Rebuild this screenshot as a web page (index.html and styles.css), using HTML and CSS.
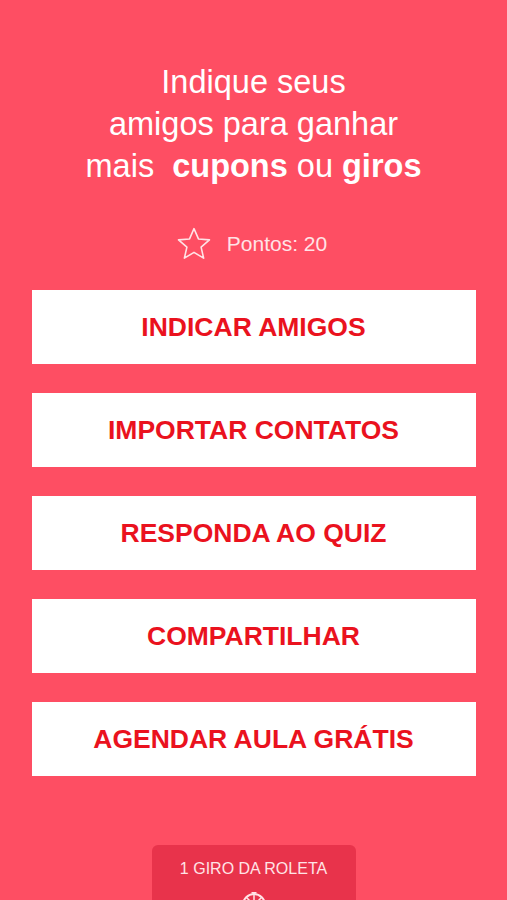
FILE: index.html
```html
<!DOCTYPE html>
<html lang="pt-BR">
<head>
  <meta charset="UTF-8" />
  <meta name="viewport" content="width=device-width, initial-scale=1.0"/>
  <title>Indique seus amigos</title>
  <link rel="stylesheet" href="styles.css">
</head>
<body>
  <div class="page">
    <h1 class="title">
      Indique seus<br>
      amigos para ganhar<br>
      mais&nbsp; <b>cupons</b> ou <b>giros</b>
    </h1>

    <div class="pontos">
      <svg class="star" width="36" height="36" viewBox="0 0 34 34">
        <path d="M17 2.5 L21.2 12.2 L31.6 13.1 L23.7 20 L26.1 30.4 L17 24.9 L7.9 30.4 L10.3 20 L2.4 13.1 L12.8 12.2 Z" fill="none" stroke="#ffe3e6" stroke-width="1.5" stroke-linejoin="round"/>
      </svg>
      <span>Pontos: 20</span>
    </div>

    <div class="acoes">
      <button class="acao">INDICAR AMIGOS</button>
      <button class="acao">IMPORTAR CONTATOS</button>
      <button class="acao">RESPONDA AO QUIZ</button>
      <button class="acao">COMPARTILHAR</button>
      <button class="acao">AGENDAR AULA GRÁTIS</button>
    </div>

    <div class="roleta">
      <span>1 GIRO DA ROLETA</span>
      <svg class="roda" width="30" height="30" viewBox="0 0 30 30">
        <circle cx="15" cy="15" r="11" fill="none" stroke="#ffe3e6" stroke-width="2"/>
        <circle cx="15" cy="15" r="3" fill="#ffe3e6"/>
        <path d="M15 4 V26 M4 15 H26 M7 7 L23 23 M23 7 L7 23" stroke="#ffe3e6" stroke-width="1.5"/>
        <path d="M12 2 L15 5 L18 2 Z" fill="#ffe3e6"/>
      </svg>
    </div>
  </div>
</body>
</html>
```

FILE: styles.css
```css
body {
  margin: 0;
  background: #fe4e63;
  font-family: "Liberation Sans", Arial, sans-serif;
  color: #fff;
  overflow: hidden;
}

.page {
  display: flex;
  flex-direction: column;
  align-items: center;
  padding-top: 61px;
  height: 900px;
  box-sizing: border-box;
}

.title {
  margin: 0;
  font-size: 32.5px;
  font-weight: normal;
  line-height: 42px;
  text-align: center;
  color: #fff;
}

.title b {
  font-weight: bold;
}

.pontos {
  margin-top: 39px;
  height: 36px;
  display: flex;
  align-items: center;
  gap: 15px;
  font-size: 21px;
  color: #ffe3e6;
  margin-right: 4px;
}

.acoes {
  margin-top: 28px;
  display: flex;
  flex-direction: column;
  gap: 29px;
  width: 444px;
}

.acao {
  height: 74px;
  border: none;
  background: #fff;
  color: #ea121e;
  font-family: "Liberation Sans", Arial, sans-serif;
  font-size: 26.5px;
  font-weight: bold;
  cursor: pointer;
}

.roleta {
  margin-top: 69px;
  width: 204px;
  height: 80px;
  background: #e8334b;
  border-radius: 6px;
  display: flex;
  flex-direction: column;
  align-items: center;
  padding-top: 15px;
  box-sizing: border-box;
  font-size: 16px;
  color: #ffe3e6;
  gap: 12px;
}
```
